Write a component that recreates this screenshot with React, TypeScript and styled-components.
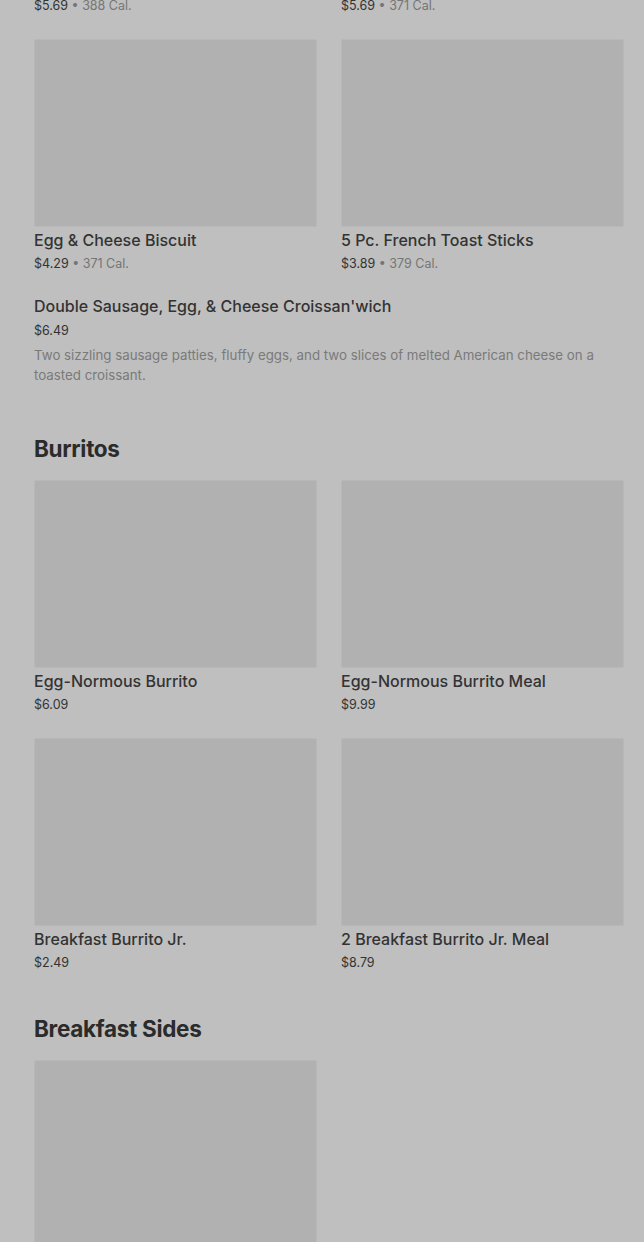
import styled, { createGlobalStyle } from 'styled-components';

const GlobalStyle = createGlobalStyle`
  html, body {
    margin: 0;
    padding: 0;
    background: #bfbfbf;
    overflow: hidden;
  }
  body {
    font-family: Inter, 'Noto Sans', 'Liberation Sans', sans-serif;
    color: #2e2e2e;
  }
`;

type Item = {
  name: string
  price: string
  cal?: string
  description?: string
}

type Section = {
  title?: string
  items: Item[]
  wide?: Item[]
}

const Page = styled.main`
  /* page is scrolled down, the first row is mostly off screen */
  margin-top: -219px;
  padding: 0 20px 40px 34px;
`;

const SectionWrap = styled.section`
  & + & {
    margin-top: 41px;
  }
`;

const Heading = styled.h2`
  margin: 0 0 15px;
  font-size: 22.5px;
  line-height: 32px;
  font-weight: 700;
  letter-spacing: -0.3px;
  color: #2b2b2b;
`;

const Grid = styled.div`
  display: grid;
  grid-template-columns: 1fr 1fr;
  column-gap: 24px;
  row-gap: 24px;
`;

const Card = styled.div`
  display: flex;
  flex-direction: column;
`;

const Thumb = styled.div`
  height: 188px;
  box-sizing: border-box;
  background: #b1b1b1;
  border: 1px solid #b8b8b8;
  border-radius: 2px;
`;

const Name = styled.div<{ $first?: boolean }>`
  margin-top: ${p => (p.$first ? '0' : '1px')};
  font-size: 16px;
  line-height: 24px;
  font-weight: 500;
  color: #333;
  white-space: nowrap;
`;

const Meta = styled.div<{ $gap?: number }>`
  margin-top: ${p => p.$gap ?? 3}px;
  font-size: 12.5px;
  line-height: 18px;
  color: #333;
`;

const Cal = styled.span`
  color: #757575;
`;

const Wide = styled.div`
  margin-top: 21px;
  padding-bottom: 7px;
`;

const Desc = styled.p`
  margin: 5px 0 0;
  font-size: 13.3px;
  line-height: 20px;
  color: #7a7a7a;
  padding-right: 10px;
`;

const sections: Section[] = [
  {
    items: [
      { name: 'Sausage Croissan\'wich', price: '$5.69', cal: '388 Cal.' },
      { name: 'Sausage Biscuit', price: '$5.69', cal: '371 Cal.' },
      { name: 'Egg & Cheese Biscuit', price: '$4.29', cal: '371 Cal.' },
      { name: '5 Pc. French Toast Sticks', price: '$3.89', cal: '379 Cal.' },
    ],
    wide: [
      {
        name: "Double Sausage, Egg, & Cheese Croissan'wich",
        price: '$6.49',
        description:
          'Two sizzling sausage patties, fluffy eggs, and two slices of melted American cheese on a toasted croissant.',
      },
    ],
  },
  {
    title: 'Burritos',
    items: [
      { name: 'Egg-Normous Burrito', price: '$6.09' },
      { name: 'Egg-Normous Burrito Meal', price: '$9.99' },
      { name: 'Breakfast Burrito Jr.', price: '$2.49' },
      { name: '2 Breakfast Burrito Jr. Meal', price: '$8.79' },
    ],
  },
  {
    title: 'Breakfast Sides',
    items: [{ name: 'Hash Browns', price: '$2.19', cal: '250 Cal.' }],
  },
];

function PriceLine({ item, gap }: { item: Item; gap?: number }) {
  return (
    <Meta $gap={gap}>
      {item.price}
      {item.cal && <Cal> • {item.cal}</Cal>}
    </Meta>
  );
}

function MenuCard({ item }: { item: Item }) {
  return (
    <Card>
      <Thumb />
      <Name>{item.name}</Name>
      <PriceLine item={item} />
    </Card>
  );
}

export default function App() {
  return (
    <>
      <GlobalStyle />
      <Page>
        {sections.map((section, i) => (
          <SectionWrap key={i}>
            {section.title && <Heading>{section.title}</Heading>}
            <Grid>
              {section.items.map(item => (
                <MenuCard key={item.name} item={item} />
              ))}
            </Grid>
            {section.wide?.map(item => (
              <Wide key={item.name}>
                <Name $first>{item.name}</Name>
                <PriceLine item={item} gap={4} />
                {item.description && <Desc>{item.description}</Desc>}
              </Wide>
            ))}
          </SectionWrap>
        ))}
      </Page>
    </>
  );
}
